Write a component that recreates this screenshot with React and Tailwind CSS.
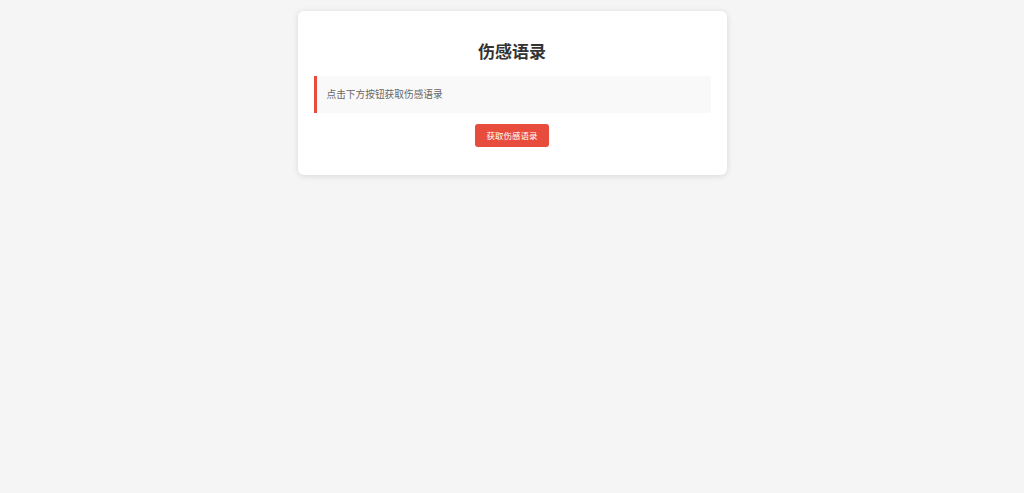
import React, { useState } from 'react';

const quotes = [
    '有些人，一旦错过就不再。',
    '后来的我们，什么都有了，却没有了我们。',
    '你走之后，我才明白，原来孤独也有声音。',
];

const App = () => {
    const [text, setText] = useState('点击下方按钮获取伤感语录');

    const nextQuote = () => {
        setText(quotes[Math.floor(Math.random() * quotes.length)]);
    };

    return (
        <div className="min-h-[493px] bg-[#f5f5f5] pt-[11px] font-['Noto_Sans_CJK_SC',sans-serif]">
            <div className="mx-auto w-[429px] bg-white rounded-[6px] shadow-[0_1px_6px_rgba(0,0,0,0.12)] px-4 pt-4 pb-[16px]">
                <h1 className="mt-[11px] text-center text-[17px] leading-[25px] font-bold text-[#333]">
                    伤感语录
                </h1>
                <div className="mt-[13px] bg-[#f9f9f9] border-l-[3px] border-[#e74c3c] rounded-r-[3px] px-[10px] py-[11px] text-[9.7px] leading-[15px] text-[#666]">
                    {text}
                </div>
                <div className="mt-[11px] mb-[12px] flex justify-center">
                    <button
                        onClick={nextQuote}
                        className="h-[23px] px-[11px] rounded-[3px] bg-[#e74c3c] text-white text-[8.5px] leading-[23px]"
                    >
                        获取伤感语录
                    </button>
                </div>
            </div>
        </div>
    );
};

export default App;
